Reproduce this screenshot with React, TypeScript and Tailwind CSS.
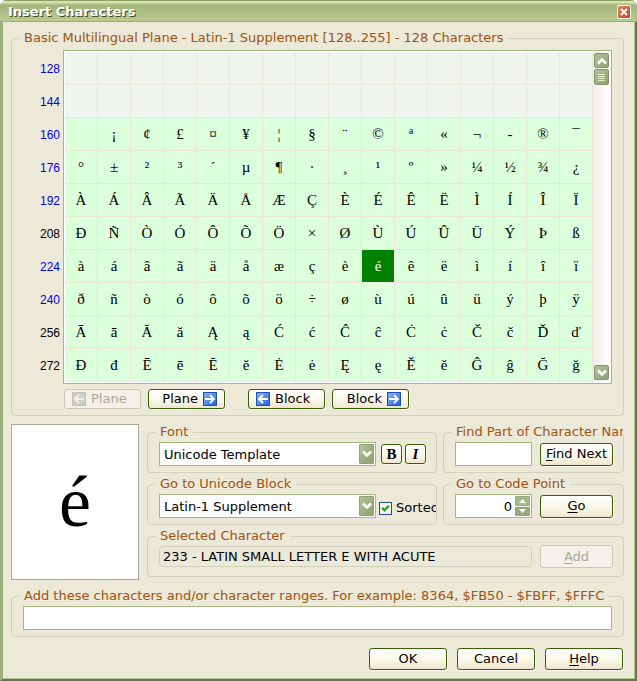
import { useState, type ReactNode } from "react";
import clsx from "clsx";

const COLUMNS = 16;
const rowStarts = [128, 144, 160, 176, 192, 208, 224, 240, 256, 272];

function charAt(code: number) {
  if (code <= 160) return "";
  // a soft hyphen has no width of its own
  if (code === 173) return "-";
  return String.fromCharCode(code);
}

const buttonLook =
  "rounded-[3px] border border-[#37620a] bg-linear-to-b from-white via-[#fbf9ea] to-[#efe6d0] text-black shadow-[1px_1px_0_#f8f5ea]";
const disabledLook = "rounded-[3px] border border-[#c9c7ba] bg-[#f5f1ea] text-[#a9a799]";
const fieldLook = "h-6 border border-[#a4b97f] bg-white";

function Group({ title, className, children }: { title: string; className?: string; children: ReactNode }) {
  return (
    <fieldset className={clsx("min-w-0 rounded-[4px] border border-[#d0d0bf] pl-[7px]", className)}>
      <legend className="h-4 max-w-full overflow-hidden px-[5px] leading-4 whitespace-nowrap text-[#a0520f]">
        {title}
      </legend>
      {children}
    </fieldset>
  );
}

function Chevron({ up, className }: { up?: boolean; className?: string }) {
  return (
    <svg viewBox="0 0 10 8" className={clsx("h-2 w-[10px]", up && "rotate-180", className)} aria-hidden="true">
      <path d="M1 1.5 L5 5.5 L9 1.5" fill="none" stroke="#fff" strokeWidth="2.6" />
    </svg>
  );
}

function ArrowIcon({ left, muted }: { left?: boolean; muted?: boolean }) {
  return (
    <svg viewBox="0 0 14 14" className="h-[14px] w-[14px] shrink-0" aria-hidden="true">
      <defs>
        <linearGradient id="blueArrow" x1="0" y1="0" x2="1" y2="1">
          <stop offset="0" stopColor="#8cb6fa" />
          <stop offset="1" stopColor="#2360e0" />
        </linearGradient>
      </defs>
      <rect x="0.5" y="0.5" width="13" height="13" fill={muted ? "#d0cdc4" : "url(#blueArrow)"} stroke={muted ? "#c2bfb6" : "#1c50b8"} />
      <g transform={left ? "translate(14 0) scale(-1 1)" : undefined}>
        <path d="M2 7 H11 M7 3 L11 7 L7 11" fill="none" stroke={muted ? "#f3f0e9" : "#fff"} strokeWidth="1.8" />
      </g>
    </svg>
  );
}

function NavButton({ label, left, disabled, className }: { label: string; left?: boolean; disabled?: boolean; className?: string }) {
  return (
    <button
      type="button"
      disabled={disabled}
      className={clsx(
        "flex h-5 w-[77px] items-center gap-[5px] px-[7px] leading-4",
        left ? "justify-start" : "justify-end",
        disabled ? disabledLook : buttonLook,
        className,
      )}
    >
      {left && <ArrowIcon left muted={disabled} />}
      <span>{label}</span>
      {!left && <ArrowIcon />}
    </button>
  );
}

function DropDown({ label, value, className }: { label: string; value: string; className?: string }) {
  return (
    <div className={clsx("relative", className)}>
      <select aria-label={label} className={clsx(fieldLook, "block w-full appearance-none pt-px pr-5 pl-1 leading-5 text-black")}>
        <option>{value}</option>
      </select>
      <span className="pointer-events-none absolute top-[2px] right-[2px] flex h-5 w-[15px] items-center justify-center rounded-[1px] border border-[#8fa27c] bg-linear-to-br from-[#b3c496] to-[#8b9f70]">
        <Chevron />
      </span>
    </div>
  );
}

function CharacterTable({ selected, onSelect }: { selected: number; onSelect: (code: number) => void }) {
  return (
    <div className="min-w-0 flex-1">
      <table className="w-full table-fixed border-separate border-spacing-0 font-['Liberation_Serif',serif] text-[15px] text-black">
        <tbody>
          {rowStarts.map((start) => (
            <tr key={start}>
              {Array.from({ length: COLUMNS }, (_, i) => {
                const code = start + i;
                return (
                  <td
                    key={code}
                    onClick={() => onSelect(code)}
                    className={clsx(
                      "h-[33px] border-r border-b border-[#ece6d8] p-0 text-center leading-4",
                      code === selected ? "bg-[#008000] text-white" : code < 160 ? "bg-[#f0f4ef]" : "bg-[#dcffdc]",
                    )}
                  >
                    {charAt(code)}
                  </td>
                );
              })}
            </tr>
          ))}
        </tbody>
      </table>
    </div>
  );
}

function ScrollBar() {
  const block = "flex w-[15px] items-center justify-center rounded-[2px] border border-[#7f946a] bg-linear-to-br from-[#b3c19c] to-[#8ea374]";
  return (
    <div className="flex w-[17px] flex-col items-center bg-linear-to-r from-[#f1eeea] to-white pt-px">
      <button type="button" aria-label="Scroll up" className={clsx(block, "h-[15px]")}>
        <Chevron up />
      </button>
      <div className={clsx(block, "mt-px h-4 flex-col gap-px")}>
        <span className="h-px w-[7px] bg-[#e3efc4]" />
        <span className="h-px w-[7px] bg-[#e3efc4]" />
        <span className="h-px w-[7px] bg-[#e3efc4]" />
        <span className="h-px w-[7px] bg-[#e3efc4]" />
      </div>
      <button type="button" aria-label="Scroll down" className={clsx(block, "mt-auto mb-[2px] h-[15px]")}>
        <Chevron />
      </button>
    </div>
  );
}

function TitleBar() {
  return (
    <header className="flex h-[22px] items-center justify-between border-t border-[#8b9f68] bg-linear-to-b from-[#dbe5b0] from-5% via-[#a3b57c] via-20% to-[#bccb92] pr-[6px] pl-2 shadow-[inset_0_-1px_0_#9bad76]">
      <h1 className="pt-px text-[13px] leading-4 font-bold text-white [text-shadow:1px_1px_0_#3c4a20]">Insert Characters</h1>
      <button
        type="button"
        aria-label="Close"
        className="flex h-[14px] w-[14px] items-center justify-center rounded-[2px] border border-white bg-linear-to-br from-[#e38a68] to-[#bf4018]"
      >
        <svg viewBox="0 0 8 8" className="h-2 w-2" aria-hidden="true">
          <path d="M1 1 L7 7 M7 1 L1 7" stroke="#fff" strokeWidth="2" />
        </svg>
      </button>
    </header>
  );
}

export default function App() {
  const [selected, setSelected] = useState(233);
  const [sorted, setSorted] = useState(true);

  return (
    <div className="flex min-h-screen flex-col overflow-hidden rounded-t-[6px] bg-[#ece9d8] font-['DejaVu_Sans',sans-serif] text-[13px] text-black">
      <TitleBar />
      <main className="flex-1 border-r-2 border-b-2 border-l-[3px] border-r-[#5f7a4c] border-b-[#5f7a4c] border-l-[#9caf7c] pt-2 pr-[11px] pb-2 pl-2 shadow-[inset_-1px_-1px_0_#b4c58a]">
        <Group title="Basic Multilingual Plane - Latin-1 Supplement [128..255] - 128 Characters" className="pt-1 pr-[11px] pb-[6px]">
          <div className="flex gap-[3px]">
            <div className="flex w-[41px] flex-col pt-[2px] text-right font-['Liberation_Sans',sans-serif] text-[12px]">
              {rowStarts.map((start) => (
                <span
                  key={start}
                  className={clsx("h-[33px] leading-[35px]", start === 208 || start > 240 ? "text-black" : "text-[#0000ee]")}
                >
                  {start}
                </span>
              ))}
            </div>
            <div className="flex min-w-0 flex-1 border border-[#a4b97f] bg-white p-px">
              <CharacterTable selected={selected} onSelect={setSelected} />
              <ScrollBar />
            </div>
          </div>
          <div className="mt-[5px] flex gap-[7px] pl-[45px]">
            <NavButton label="Plane" left disabled />
            <NavButton label="Plane" />
            <NavButton label="Block" left className="ml-4" />
            <NavButton label="Block" />
          </div>
        </Group>

        <div className="mt-2 flex gap-2">
          <div className="flex h-[156px] w-32 shrink-0 items-center justify-center border border-[#aca899] bg-white font-['Liberation_Serif',serif] text-[72px] leading-none">
            {charAt(selected)}
          </div>
          <div className="flex min-w-0 flex-1 flex-col gap-[3px]">
            <div className="flex gap-[6px]">
              <Group title="Font" className="flex-1 pt-[2px] pb-[6px]">
                <div className="flex items-center pl-1">
                  <DropDown label="Font" value="Unicode Template" className="w-[217px]" />
                  <button type="button" className={clsx(buttonLook, "ml-[5px] h-5 w-[21px] font-['Liberation_Serif',serif] text-[15px] leading-4 font-bold")}>
                    B
                  </button>
                  <button type="button" className={clsx(buttonLook, "ml-[3px] h-5 w-[21px] font-['Liberation_Serif',serif] text-[15px] leading-4 font-bold italic")}>
                    I
                  </button>
                </div>
              </Group>
              <Group title="Find Part of Character Name" className="w-[181px] pt-[2px] pb-[6px]">
                <div className="flex items-center gap-2 pr-[10px] pl-1">
                  <input type="text" aria-label="Find part of character name" className={clsx(fieldLook, "min-w-0 flex-1 px-1")} />
                  <button type="button" className={clsx(buttonLook, "h-[23px] w-[73px] leading-4 whitespace-nowrap")}>
                    <span className="underline underline-offset-2">F</span>ind Next
                  </button>
                </div>
              </Group>
            </div>

            <div className="flex gap-[6px]">
              <Group title="Go to Unicode Block" className="flex-1 pt-[2px] pb-[6px]">
                <div className="flex items-center overflow-hidden pl-1">
                  <DropDown label="Go to Unicode block" value="Latin-1 Supplement" className="w-[217px] shrink-0" />
                  <label className="ml-[3px] flex items-center gap-1 pt-1 whitespace-nowrap">
                    <span className="relative flex">
                      <input
                        type="checkbox"
                        checked={sorted}
                        onChange={(e) => setSorted(e.target.checked)}
                        className="h-[13px] w-[13px] appearance-none border border-[#1c5180] bg-[#f4f4f0]"
                      />
                      {sorted && (
                        <svg viewBox="0 0 13 13" className="pointer-events-none absolute inset-0" aria-hidden="true">
                          <path d="M3.2 5.8 L5.5 8.4 L9.8 3.8" fill="none" stroke="#21a121" strokeWidth="2.3" />
                        </svg>
                      )}
                    </span>
                    Sorted
                  </label>
                </div>
              </Group>
              <Group title="Go to Code Point" className="w-[181px] pt-[2px] pb-[6px]">
                <div className="flex items-center gap-2 pr-[10px] pl-1">
                  <div className="relative min-w-0 flex-1">
                    <input
                      type="text"
                      inputMode="numeric"
                      aria-label="Code point"
                      defaultValue="0"
                      className={clsx(fieldLook, "block w-full pr-[19px] text-right")}
                    />
                    <div className="absolute top-[2px] right-[2px] flex h-5 w-[15px] flex-col gap-px">
                      <button type="button" aria-label="Increase" className="flex flex-1 items-center justify-center rounded-[1px] border border-[#9aac80] bg-[#a5b889]">
                        <svg viewBox="0 0 7 4" className="h-1 w-[7px]" aria-hidden="true">
                          <path d="M0 4 L3.5 0 L7 4 Z" fill="#fff" />
                        </svg>
                      </button>
                      <button type="button" aria-label="Decrease" className="flex flex-1 items-center justify-center rounded-[1px] border border-[#8fa274] bg-[#98ab7c]">
                        <svg viewBox="0 0 7 4" className="h-1 w-[7px]" aria-hidden="true">
                          <path d="M0 0 L3.5 4 L7 0 Z" fill="#fff" />
                        </svg>
                      </button>
                    </div>
                  </div>
                  <button type="button" className={clsx(buttonLook, "h-[23px] w-[73px] leading-4")}>
                    <span className="underline underline-offset-2">G</span>o
                  </button>
                </div>
              </Group>
            </div>

            <Group title="Selected Character" className="pt-px pb-2">
              <div className="flex items-center gap-2 pr-[10px] pl-1">
                <output className="block h-[21px] min-w-0 flex-1 overflow-hidden rounded-[4px] border border-[#d0d0bf] px-[3px] leading-5 whitespace-nowrap">
                  233 - LATIN SMALL LETTER E WITH ACUTE
                </output>
                <button type="button" disabled className={clsx(disabledLook, "h-[23px] w-[73px] leading-4")}>
                  <span className="underline underline-offset-2">A</span>dd
                </button>
              </div>
            </Group>
          </div>
        </div>

        <Group title="Add these characters and/or character ranges. For example: 8364, $FB50 - $FBFF, $FFFC" className="mt-2 pt-[2px] pb-[6px]">
          <div className="flex pr-[11px] pl-1">
            <input type="text" aria-label="Characters and ranges to add" className={clsx(fieldLook, "min-w-0 flex-1 px-1")} />
          </div>
        </Group>

        <footer className="mt-[11px] flex justify-end gap-[10px] pr-px">
          <button type="button" className={clsx(buttonLook, "h-[22px] w-[78px] leading-4")}>OK</button>
          <button type="button" className={clsx(buttonLook, "h-[22px] w-[78px] leading-4")}>Cancel</button>
          <button type="button" className={clsx(buttonLook, "h-[22px] w-[78px] leading-4")}>
            <span className="underline underline-offset-2">H</span>elp
          </button>
        </footer>
      </main>
    </div>
  );
}
